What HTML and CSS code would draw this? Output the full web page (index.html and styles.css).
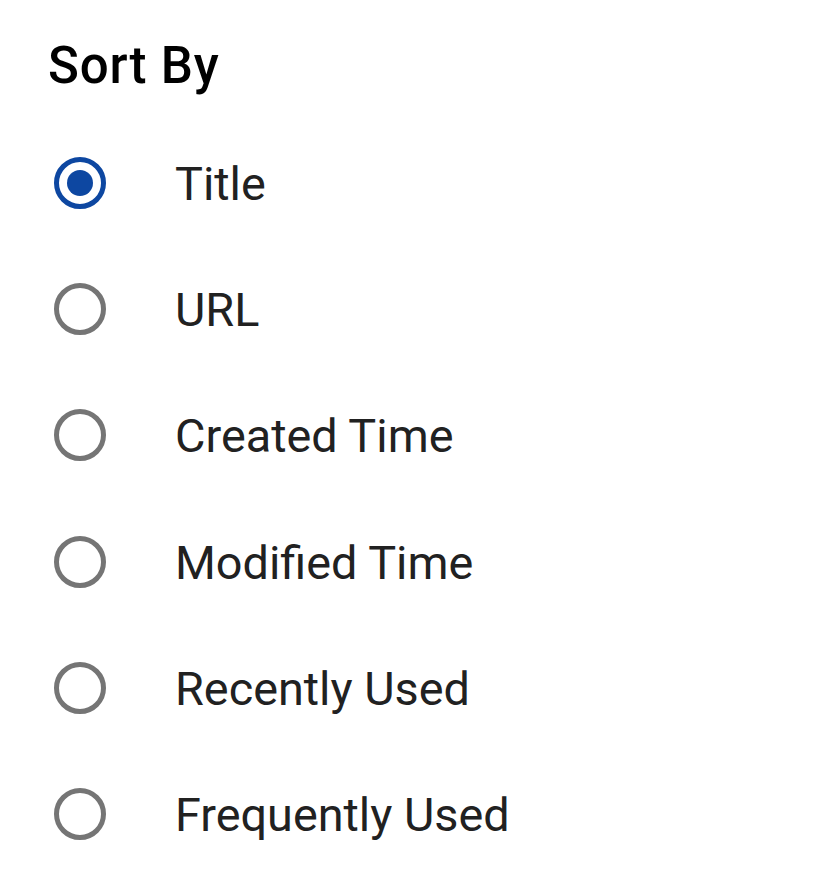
FILE: index.html
```html
<!DOCTYPE html>
<html lang="en">
<head>
<meta charset="utf-8">
<title>Sort By</title>
<link rel="stylesheet" href="styles.css">
</head>
<body>
<div class="dialog">
  <h1 class="title">Sort By</h1>
  <div class="options" role="radiogroup">
    <div class="option"><span class="radio checked"></span><span class="label">Title</span></div>
    <div class="option"><span class="radio"></span><span class="label">URL</span></div>
    <div class="option"><span class="radio"></span><span class="label">Created Time</span></div>
    <div class="option"><span class="radio"></span><span class="label">Modified Time</span></div>
    <div class="option"><span class="radio"></span><span class="label">Recently Used</span></div>
    <div class="option"><span class="radio"></span><span class="label">Frequently Used</span></div>
  </div>
</div>
</body>
</html>
```
FILE: styles.css
```css
html, body {
  margin: 0;
  padding: 0;
  background: #ffffff;
}
body {
  font-family: Roboto, "Liberation Sans", sans-serif;
}
.dialog {
  padding: 36px 0 0 48px;
}
.title {
  margin: 0 0 24px 0;
  font-size: 51px;
  line-height: 60px;
  font-weight: 500;
  letter-spacing: 0.8px;
  color: #000000;
}
.options {
  display: flex;
  flex-direction: column;
}
.option {
  height: 126.2px;
  display: flex;
  align-items: center;
  padding-left: 6px;
}
.radio {
  width: 52px;
  height: 52px;
  box-sizing: border-box;
  border: 5px solid #757575;
  border-radius: 50%;
  display: flex;
  align-items: center;
  justify-content: center;
  flex: none;
}
.radio.checked {
  border-color: #0d47a1;
}
.radio.checked::after {
  content: "";
  width: 26px;
  height: 26px;
  border-radius: 50%;
  background: #0d47a1;
}
.label {
  margin-left: 69px;
  padding-top: 3px;
  font-size: 46.8px;
  line-height: 47px;
  color: #212121;
}
```
